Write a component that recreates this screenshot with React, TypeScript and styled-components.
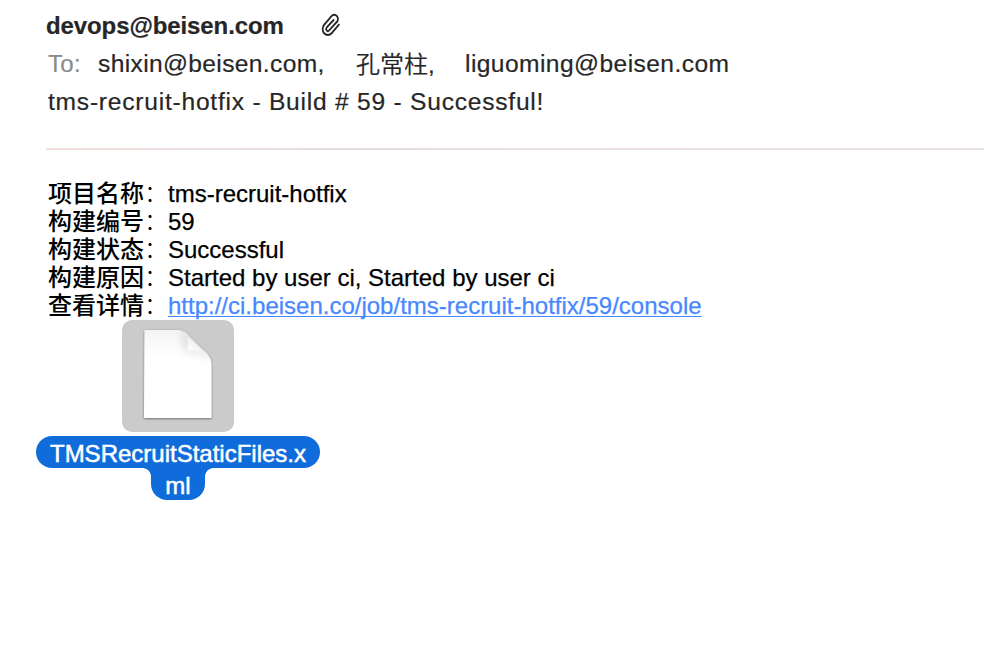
import React from "react";
import styled, { createGlobalStyle } from "styled-components";

const GlobalStyle = createGlobalStyle`
  html, body { margin: 0; background: #fff; overflow: hidden; }
  * { box-sizing: border-box; }
`;

const Message = styled.main`
  height: 656px;
  padding-top: 7px;
  background: #fff;
  color: #000;
  font: 24px/28px "Liberation Sans", "Noto Sans CJK SC", sans-serif;
  white-space: nowrap;
`;

const Header = styled.header`
  height: 141px;
  margin-left: 46px;
  color: #262626;
  -webkit-text-stroke: 0.2px currentColor;
`;

const SenderRow = styled.div`
  display: flex;
  align-items: center;
  height: 38px;
`;

const Sender = styled.strong`
  width: 274px;
  font-weight: 700;
  letter-spacing: -0.1px;
`;

const Clip = styled.svg`
  display: block;
  width: 21px;
  height: 24px;
  margin-bottom: 2px;
`;

const Recipients = styled.div`
  display: flex;
  align-items: center;
  height: 38px;
  padding-left: 2px;
`;

const FieldName = styled.span`
  width: 50px;
  letter-spacing: 0.3px;
  color: #8a8a8a;
`;

const Recipient = styled.span<{ $width: number; $spacing: number }>`
  width: ${(p) => p.$width}px;
  letter-spacing: ${(p) => p.$spacing}px;
  font-size: 24.6px;
`;

const ShortRecipient = styled(Recipient)`
  padding-top: 1px;
  font-size: 24px;
  font-weight: 350;
`;

const Subject = styled.div`
  height: 38px;
  line-height: 38px;
  padding-left: 2px;
  font-size: 24.6px;
  letter-spacing: 0.76px;
`;

const Divider = styled.hr`
  height: 2px;
  margin: 0 0 30px 46px;
  border: 0;
  background: linear-gradient(90deg, #f1dfdb, #e5dde2 35%, #ece1df 65%, #eae1e6);
`;

const Details = styled.dl`
  margin: 0 0 0 48px;
`;

const DetailRow = styled.div`
  display: flex;
  height: 28px;
`;

const Label = styled.dt`
  width: 120px;
  height: 28px;
  font-family: "Noto Sans CJK SC", sans-serif;
  font-weight: 500;
  line-height: 24px;
`;

const Colon = styled.span`
  font-weight: 300;
`;

const Value = styled.dd`
  margin: 0;
  -webkit-text-stroke: 0.25px currentColor;
`;

const Link = styled.a`
  color: #4788ff;
  text-decoration: underline;
  text-decoration-thickness: 1px;
  text-underline-offset: 2px;
  text-decoration-skip-ink: none;
`;

const Attachment = styled.section`
  display: flex;
  flex-direction: column;
  align-items: center;
  width: 284px;
  margin-left: 36px;
`;

const IconTile = styled.div`
  width: 112px;
  height: 112px;
  border-radius: 10px;
  background: #cbcbcb;
`;

const FileIcon = styled.svg`
  display: block;
  width: 112px;
  height: 112px;
`;

const FileName = styled.div`
  display: flex;
  flex-direction: column;
  align-items: center;
  width: 284px;
  margin-top: 4px;
  color: #fff;
  -webkit-text-stroke: 0.5px #fff;
`;

const NameLine = styled.span`
  width: 284px;
  height: 32px;
  padding-top: 4px;
  border-radius: 16px;
  background: #106cdb;
  text-align: center;
`;

const NameTail = styled.span`
  position: relative;
  width: 54px;
  height: 32px;
  padding-top: 4px;
  border-radius: 0 0 16px 16px;
  background: #106cdb;
  text-align: center;

  &::before,
  &::after {
    content: "";
    position: absolute;
    top: 0;
    width: 8px;
    height: 8px;
  }
  &::before {
    right: 100%;
    background: radial-gradient(circle at 0 100%, transparent 7.5px, #106cdb 8px);
  }
  &::after {
    left: 100%;
    background: radial-gradient(circle at 100% 100%, transparent 7.5px, #106cdb 8px);
  }
`;

const consoleUrl = "http://ci.beisen.co/job/tms-recruit-hotfix/59/console";

const details = [
  { label: "项目名称", value: "tms-recruit-hotfix" },
  { label: "构建编号", value: "59" },
  { label: "构建状态", value: "Successful" },
  { label: "构建原因", value: "Started by user ci, Started by user ci" },
  { label: "查看详情", value: consoleUrl, href: consoleUrl },
];

function PaperclipIcon() {
  return (
    <Clip
      viewBox="0 0 24 24"
      preserveAspectRatio="none"
      fill="none"
      stroke="#262626"
      strokeWidth="2"
      strokeLinecap="round"
      strokeLinejoin="round"
    >
      <path d="m15.500 7-7.914 7.586a2 2 0 0 0 2.829 2.829l8.414-8.086a4.200 4.200 0 1 0-5.657-6.157l-8.379 8.551a6 6 0 1 0 8.485 8.485l8.379-8.551" />
    </Clip>
  );
}

function DocumentIcon() {
  return (
    <FileIcon viewBox="0 0 112 112">
      <defs>
        <linearGradient id="paper" x1="0" y1="0" x2="0" y2="1">
          <stop offset="0" stopColor="#f4f4f4" />
          <stop offset="0.3" stopColor="#fff" />
        </linearGradient>
        <linearGradient id="fold" x1="0" y1="1" x2="0.6" y2="0.4">
          <stop offset="0" stopColor="#fff" />
          <stop offset="1" stopColor="#f0f0f0" />
        </linearGradient>
        <filter id="shadow" x="-10%" y="-10%" width="120%" height="120%">
          <feDropShadow dx="0" dy="0.8" stdDeviation="0.8" floodColor="#000" floodOpacity="0.5" />
        </filter>
        <filter id="soft" x="-50%" y="-50%" width="200%" height="200%">
          <feGaussianBlur stdDeviation="4" />
        </filter>
        <clipPath id="sheet">
          <path d="M22.500 10H55c6 0 9 2.500 12 5.500l16 16c4.500 4.500 6.500 8 6.500 15v51.500h-67.500Z" />
        </clipPath>
      </defs>
      <path d="M22.500 10H55c6 0 9 2.500 12 5.500l16 16c4.500 4.500 6.500 8 6.500 15v51.500h-67.500Z" fill="url(#paper)" filter="url(#shadow)" />
      <g clipPath="url(#sheet)">
        <path d="M59 9 68 16v14l18 2 4 9-8-6-18-3Z" fill="#888" opacity="0.32" filter="url(#soft)" />
      </g>
      <path d="M65.800 15.500c.5 5 .4 10-.3 15 6-.9 11-.8 16.500.2Z" fill="url(#fold)" />
      <path d="m65.800 15.500 16.200 15.200" stroke="#bcbcbc" strokeWidth="0.8" fill="none" />
    </FileIcon>
  );
}

export default function App() {
  return (
    <>
      <GlobalStyle />
      <Message>
        <Header>
          <SenderRow>
            <Sender>devops@beisen.com</Sender>
            <PaperclipIcon />
          </SenderRow>
          <Recipients>
            <FieldName>To:</FieldName>
            <Recipient $width={258} $spacing={0.35}>shixin@beisen.com,</Recipient>
            <ShortRecipient $width={109} $spacing={0}>孔常柱,</ShortRecipient>
            <Recipient $width={270} $spacing={0.42}>liguoming@beisen.com</Recipient>
          </Recipients>
          <Subject>tms-recruit-hotfix - Build # 59 - Successful!</Subject>
        </Header>
        <Divider />
        <Details>
          {details.map(({ label, value, href }) => (
            <DetailRow key={label}>
              <Label>
                {label}
                <Colon>：</Colon>
              </Label>
              <Value>{href ? <Link href={href}>{value}</Link> : value}</Value>
            </DetailRow>
          ))}
        </Details>
        <Attachment>
          <IconTile>
            <DocumentIcon />
          </IconTile>
          <FileName>
            <NameLine>TMSRecruitStaticFiles.x</NameLine>
            <NameTail>ml</NameTail>
          </FileName>
        </Attachment>
      </Message>
    </>
  );
}
